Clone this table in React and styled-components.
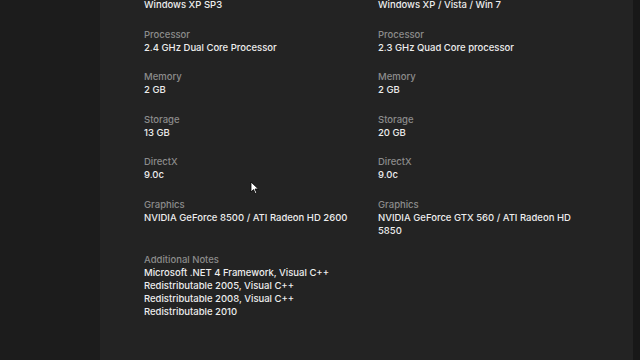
import styled, { createGlobalStyle } from "styled-components";

const GlobalStyle = createGlobalStyle`
  html, body {
    margin: 0;
    padding: 0;
    background: #1b1b1b;
    overflow: hidden;
  }
`;

const Page = styled.div`
  position: relative;
  width: 640px;
  height: 360px;
  display: flex;
  background: #1c1c1c;
  overflow: hidden;
  font-family: Inter, "Noto Sans", sans-serif;
`;

const Gutter = styled.div`
  width: ${props => props.w}px;
  flex-shrink: 0;
  background: ${props => props.bg};
`;

const Panel = styled.div`
  flex: 1;
  background: #232323;
  padding: 0 0 0 44px;
  overflow: hidden;
`;

// scrolled so the OS label sits just above the top edge
const Specs = styled.div`
  display: grid;
  grid-template-columns: 210px 210px;
  column-gap: 24px;
  row-gap: 16.5px;
  margin-top: -15px;
`;

const Spec = styled.div`
  display: flex;
  flex-direction: column;
  grid-column: ${props => props.col};
`;

const Label = styled.span`
  font-size: 9.5px;
  line-height: 13px;
  font-weight: 500;
  color: #8c8c8c;
`;

const Value = styled.span`
  font-size: 9.5px;
  line-height: 13px;
  font-weight: 500;
  color: #ededed;
`;

const Cursor = styled.svg`
  position: absolute;
  left: 250px;
  top: 181px;
`;

const minimum = [
  ["OS", "Windows XP SP3"],
  ["Processor", "2.4 GHz Dual Core Processor"],
  ["Memory", "2 GB"],
  ["Storage", "13 GB"],
  ["DirectX", "9.0c"],
  ["Graphics", "NVIDIA GeForce 8500 / ATI Radeon HD 2600"],
];

const recommended = [
  ["OS", "Windows XP / Vista / Win 7"],
  ["Processor", "2.3 GHz Quad Core processor"],
  ["Memory", "2 GB"],
  ["Storage", "20 GB"],
  ["DirectX", "9.0c"],
  ["Graphics", "NVIDIA GeForce GTX 560 / ATI Radeon HD 5850"],
];

const App = () => {
  const rows = [];
  minimum.forEach((m, i) => {
    const r = recommended[i];
    rows.push(
      <Spec key={"m" + i} col={1}>
        <Label>{m[0]}</Label>
        <Value>{m[1]}</Value>
      </Spec>
    );
    rows.push(
      <Spec key={"r" + i} col={2}>
        <Label>{r[0]}</Label>
        <Value>{r[1]}</Value>
      </Spec>
    );
  });

  return (
    <>
      <GlobalStyle />
      <Page>
        <Gutter w={100} bg="#1c1c1c" />
        <Panel>
          <Specs>
            {rows}
            <Spec col={1}>
              <Label>Additional Notes</Label>
              <Value>
                Microsoft .NET 4 Framework, Visual C++ Redistributable 2005, Visual C++
                Redistributable 2008, Visual C++ Redistributable 2010
              </Value>
            </Spec>
          </Specs>
        </Panel>
        <Gutter w={7} bg="#181818" />
        <Cursor width="10" height="14" viewBox="0 0 10 14">
          <path d="M1 1 L1 11 L3.5 8.6 L5.3 12.6 L6.8 11.9 L5 8 L8.4 8 Z" fill="#fff" stroke="#000" strokeWidth="0.8" />
        </Cursor>
      </Page>
    </>
  );
};

export default App;
